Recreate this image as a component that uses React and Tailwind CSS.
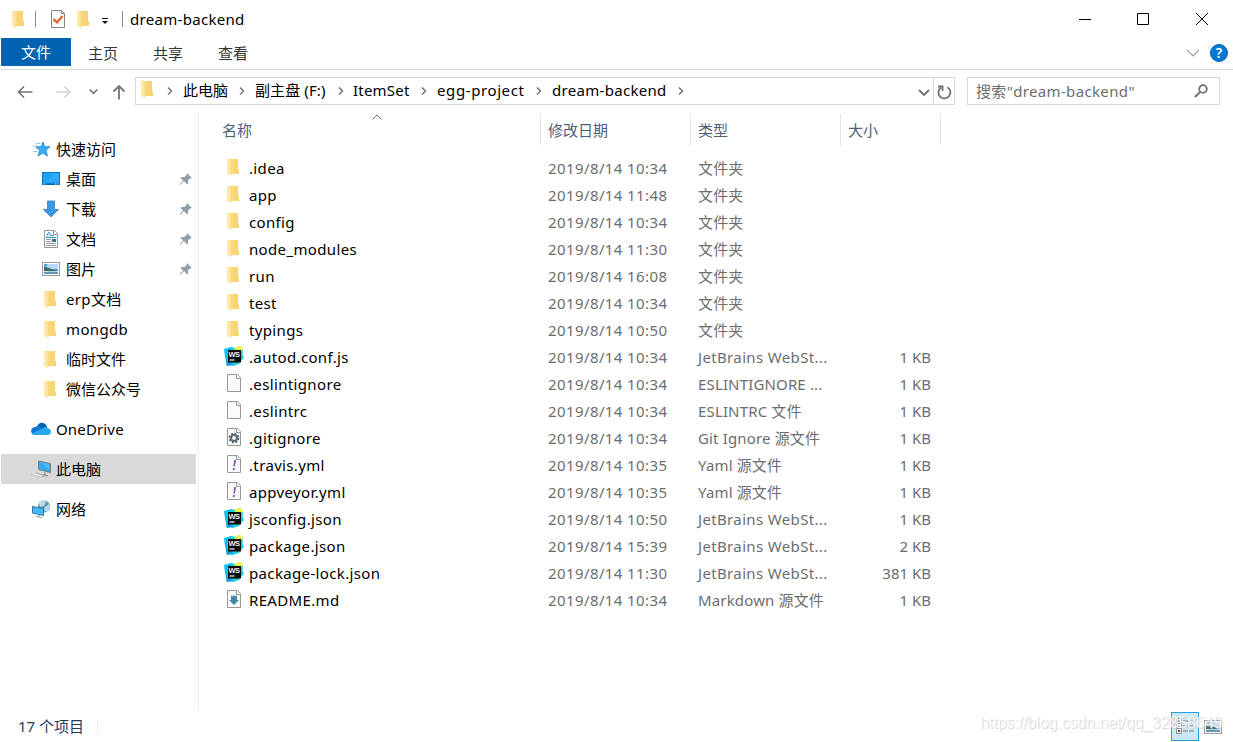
import React from "react";
import clsx from "clsx";

const quickAccess = [
  { name: "桌面", icon: "desktop", pinned: true },
  { name: "下载", icon: "download", pinned: true },
  { name: "文档", icon: "document", pinned: true },
  { name: "图片", icon: "picture", pinned: true },
  { name: "erp文档", icon: "folder" },
  { name: "mongdb", icon: "folder" },
  { name: "临时文件", icon: "folder" },
  { name: "微信公众号", icon: "folder" },
];

const files = [
  { name: ".idea", icon: "folder", date: "2019/8/14 10:34", type: "文件夹" },
  { name: "app", icon: "folder", date: "2019/8/14 11:48", type: "文件夹" },
  { name: "config", icon: "folder", date: "2019/8/14 10:34", type: "文件夹" },
  { name: "node_modules", icon: "folder", date: "2019/8/14 11:30", type: "文件夹" },
  { name: "run", icon: "folder", date: "2019/8/14 16:08", type: "文件夹" },
  { name: "test", icon: "folder", date: "2019/8/14 10:34", type: "文件夹" },
  { name: "typings", icon: "folder", date: "2019/8/14 10:50", type: "文件夹" },
  { name: ".autod.conf.js", icon: "webstorm", date: "2019/8/14 10:34", type: "JetBrains WebSt...", size: "1 KB" },
  { name: ".eslintignore", icon: "file", date: "2019/8/14 10:34", type: "ESLINTIGNORE ...", size: "1 KB" },
  { name: ".eslintrc", icon: "file", date: "2019/8/14 10:34", type: "ESLINTRC 文件", size: "1 KB" },
  { name: ".gitignore", icon: "gear", date: "2019/8/14 10:34", type: "Git Ignore 源文件", size: "1 KB" },
  { name: ".travis.yml", icon: "yaml", date: "2019/8/14 10:35", type: "Yaml 源文件", size: "1 KB" },
  { name: "appveyor.yml", icon: "yaml", date: "2019/8/14 10:35", type: "Yaml 源文件", size: "1 KB" },
  { name: "jsconfig.json", icon: "webstorm", date: "2019/8/14 10:50", type: "JetBrains WebSt...", size: "1 KB" },
  { name: "package.json", icon: "webstorm", date: "2019/8/14 15:39", type: "JetBrains WebSt...", size: "2 KB" },
  { name: "package-lock.json", icon: "webstorm", date: "2019/8/14 11:30", type: "JetBrains WebSt...", size: "381 KB" },
  { name: "README.md", icon: "markdown", date: "2019/8/14 10:34", type: "Markdown 源文件", size: "1 KB" },
];

const Folder = () => (
  <svg width="20" height="20" viewBox="0 0 20 20" className="shrink-0">
    <path d="M4 2h10v10h1v5H4z" fill="#fadb80" />
    <path d="M9 2h5v10h1v5H9z" fill="#f5d06d" opacity=".6" />
    <path d="M3 2l4 2v15l-4-2z" fill="#ffe9a6" />
    <path d="M7 4v14.500" stroke="#f2d27a" strokeWidth=".6" />
  </svg>
);

// blank sheet with a folded corner, other file icons draw on top of it
const Sheet = ({ children }) => (
  <svg width="20" height="20" viewBox="0 0 20 20" className="shrink-0">
    <path d="M3.500 1.500h10l3 3v14h-13z" fill="#fafafa" stroke="#979797" />
    <path d="M12.500 1.500v4h4" fill="#fff" stroke="#979797" />
    {children}
  </svg>
);

const WebStorm = () => (
  <svg width="20" height="20" viewBox="0 0 20 20" className="shrink-0">
    <path d="M0 3l7-2 6 2-1 14-9 3-2-9z" fill="#07c3f2" />
    <path d="M7 1l10 2 2 1-.5 4L20 12l-3 3-2 3-6 2-6-1z" fill="#1fd3dc" />
    <path d="M10 3l4-3h3l2 4-4 2z" fill="#e9f24c" />
    <path d="M2 14l1 6 7-2z" fill="#1596e8" />
    <rect x="4" y="4" width="13" height="12.500" fill="#080808" />
    <text x="4.500" y="10.500" fontSize="7.500" fontWeight="700" textLength="11.500" className="font-['Liberation_Sans']" fill="#eee">
      WS
    </text>
    <path d="M5.500 14h5" stroke="#fff" strokeWidth="1.200" />
  </svg>
);

const Picture = () => (
  <svg width="20" height="20" viewBox="0 0 20 20" className="shrink-0">
    <rect x="1.500" y="3.500" width="17" height="13" fill="#fff" stroke="#9a9a9a" />
    <rect x="3" y="5" width="14" height="10" fill="#5aa0e6" />
    <path d="M7 5h10v5H5c0-2 1-4 2-5z" fill="#b8d9f7" />
    <path d="M3 8c4 0 6 2 14 4v1H3z" fill="#3d6b66" />
    <path d="M3 12h14v3H3z" fill="#6496b8" />
    <path d="M3 12c5 .5 8 .5 14 0v1H3z" fill="#dce9ef" />
  </svg>
);

const FileIcon = ({ type }) => {
  switch (type) {
    case "folder":
      return <Folder />;
    case "webstorm":
      return <WebStorm />;
    case "picture":
      return <Picture />;
    case "file":
      return <Sheet />;
    case "gear":
      return (
        <Sheet>
          <circle cx="10" cy="11" r="4.400" fill="none" stroke="#566b78" strokeWidth="2" strokeDasharray="1.900 1.560" />
          <circle cx="10" cy="11" r="3" fill="none" stroke="#566b78" strokeWidth="2.200" />
        </Sheet>
      );
    case "yaml":
      return (
        <Sheet>
          <path d="M10.200 6h2l-1.300 6.500H9.400z" fill="#8d55b5" />
          <path d="M9 14h1.900l-.4 2H8.600z" fill="#8d55b5" />
        </Sheet>
      );
    case "markdown":
      return (
        <Sheet>
          <path d="M7 6l1.500 1.500L10 6l1.500 1.500L13 6v5h2l-5 5-5-5h2z" fill="#4388a8" />
        </Sheet>
      );
    case "document":
      return (
        <Sheet>
          <path d="M5.500 7.500l2-4h1l1 4M10 6.500h3M5 8.500h10" stroke="#2b9bd6" fill="none" />
          <path d="M5 10.500h5M5 12.500h5M5 14.500h10M5 16.500h10" stroke="#9a9a9a" />
          <rect x="11" y="10" width="4" height="3" fill="#36708f" />
        </Sheet>
      );
    case "desktop":
      return (
        <svg width="20" height="20" viewBox="0 0 20 20" className="shrink-0">
          <rect x="1.500" y="3.500" width="17" height="12" fill="#18a0fb" stroke="#0876c0" />
          <path d="M12 4h6v8L4 15z" fill="#3eb1ff" opacity=".5" />
          <path d="M2 15h16" stroke="#075b9c" />
          <path d="M3 15h1M14 15h1M16 15h1" stroke="#fff" />
        </svg>
      );
    case "download":
      return (
        <svg width="20" height="20" viewBox="0 0 20 20" className="shrink-0">
          <path d="M6.500 2h7v8.500h4L10 18l-7.500-7.500h4z" fill="#3c97e8" stroke="#2b7ccb" strokeWidth=".8" />
        </svg>
      );
    default:
      return null;
  }
};

const Star = () => (
  <svg width="20" height="20" viewBox="0 0 20 20" className="shrink-0">
    <path d="M12 3l1.700 4.700h5.300l-4 3.600 1.500 5.700-4.800-3-4.700 3 1.600-5.700L5 7.700h5.300z" fill="#3baef0" stroke="#1c86d0" strokeWidth=".8" />
    <path d="M5 4.500h4.500M2.500 7h5M4.500 9.500h3M2 12.500h4.500" stroke="#6bbdf0" strokeWidth=".8" />
  </svg>
);

const OneDrive = () => (
  <svg width="20" height="20" viewBox="0 0 20 20" className="shrink-0">
    <path d="M6 8c1-5 8-6 10 0l-2 5z" fill="#0364b8" />
    <path d="M4.500 16C-1 16-1.500 8.500 4 8c2-1.500 5-.8 6 1l5 5-2 2z" fill="#0f78d4" />
    <path d="M13 8.500c2-1.200 3.500-.5 4 .8 4 .7 4 6.700-.5 6.700H4c-1.500 0-2.500-.6-3-1.500z" fill="#28a8ea" />
  </svg>
);

const Computer = () => (
  <svg width="20" height="20" viewBox="0 0 20 20" className="shrink-0">
    <path d="M7.500 2l12 2.500v9l-12-3z" fill="#35aaf3" stroke="#71808a" />
    <path d="M9 3l9 7V5z" fill="#70caff" opacity=".55" />
    <path d="M14 13v3M12 15.500l5 1.500" stroke="#7c8790" />
    <path d="M0 15l10 3 5-1-10-3" fill="none" stroke="#aab0b6" />
    <path d="M1 14.800l10 2.700" stroke="#eee" />
  </svg>
);

const Network = () => (
  <svg width="20" height="20" viewBox="0 0 20 20" className="shrink-0">
    <circle cx="13" cy="7.500" r="6" fill="#5b9bb9" />
    <path d="M8 4c3-3 6-2 7-1l-2 4-4 1zM14 8l4-3 1 3-3 5-3-2z" fill="#bddae8" />
    <path d="M1.500 7.500l11 2v7l-11-2.500z" fill="#47b9fa" stroke="#33789f" />
    <path d="M8 16v2M5 17.500l6 1" stroke="#90a0aa" />
  </svg>
);

const Pin = () => (
  <svg width="14" height="14" viewBox="0 0 14 14" className="shrink-0">
    <path d="M8 1l5 5-2 .5-2 2v3l-1 1-3-3.500-4 4L.500 12.500 4 8.500 1.500 6l1-1h3l2-2z" fill="#90a0ab" />
  </svg>
);

const Chevron = ({ className }) => (
  <svg width="6" height="10" viewBox="0 0 6 10" className={clsx("shrink-0", className)}>
    <path d="M1 1.500L4.500 5 1 8.500" fill="none" stroke="#757575" strokeWidth="1.500" />
  </svg>
);

const TitleBar = () => (
  <header className="flex h-[38px] items-center pl-[9px]">
    <Folder />
    <div className="ml-[6px] h-4 w-px bg-[#8f8f8f]" />
    <svg width="14" height="18" viewBox="0 0 14 18" className="ml-[15px]">
      <path d="M.500.500h10l3 3v14H.500z" fill="#fafafa" stroke="#858585" />
      <path d="M10.500.500v3h3" fill="none" stroke="#858585" />
      <path d="M2.500 9l3.500 3.500L11.500 6" fill="none" stroke="#ed5a24" strokeWidth="2" />
    </svg>
    <div className="ml-[9px]">
      <Folder />
    </div>
    <svg width="8" height="7" viewBox="0 0 8 7" className="ml-[7px] mt-1">
      <path d="M1 .500h6" stroke="#111" />
      <path d="M1 3h6L4 6z" fill="#111" />
    </svg>
    <div className="ml-[13px] h-4 w-px bg-[#8f8f8f]" />
    <h1 className="ml-[7px] text-[15px] tracking-[0.3px]">dream-backend</h1>
    <div className="ml-auto mr-[25px] flex items-center">
      <svg width="12" height="13" viewBox="0 0 12 13">
        <path d="M0 6.500h12" stroke="#000" />
      </svg>
      <svg width="12" height="12" viewBox="0 0 12 12" className="ml-[46px]">
        <path d="M.500.500h11v11H.500z" fill="none" stroke="#000" />
      </svg>
      <svg width="12" height="12" viewBox="0 0 12 12" className="ml-[47px]">
        <path d="M0 0l12 12M12 0L0 12" stroke="#000" />
      </svg>
    </div>
  </header>
);

const Ribbon = () => (
  <nav className="ml-px flex h-8 items-start border-b border-[#dadbdc] text-[15px]">
    <button className="h-7 w-[70px] bg-[#0063b1] text-white">文件</button>
    <button className="ml-[17px] h-7 pt-0.5 text-[#333]">主页</button>
    <button className="ml-[35px] h-7 pt-0.5 text-[#333]">共享</button>
    <button className="ml-[35px] h-7 pt-0.5 text-[#333]">查看</button>
    <div className="ml-auto mr-[5px] flex h-[30px] items-center gap-[11px]">
      <svg width="12" height="8" viewBox="0 0 12 8">
        <path d="M0 1l6 6 6-6" fill="none" stroke="#999" strokeWidth="1.200" />
      </svg>
      <div className="flex h-[18px] w-[18px] items-center justify-center rounded-full border border-[#0561ae] bg-[#0078d7] text-[14px] font-semibold leading-none text-white">
        ?
      </div>
    </div>
  </nav>
);

const AddressBar = () => (
  <div className="flex h-[42px] items-start pt-[7px] text-[15px]">
    <div className="flex h-7 w-[135px] items-center pl-[17px] pt-px">
      <svg width="16" height="14" viewBox="0 0 16 14">
        <path d="M15.500 7H1.500M7 1.500L1.500 7 7 12.500" fill="none" stroke="#707070" strokeWidth="1.600" />
      </svg>
      <svg width="16" height="14" viewBox="0 0 16 14" className="ml-[23px]">
        <path d="M0 7h14M8.500 1.500L14 7 8.500 12.500" fill="none" stroke="#d4d4d4" strokeWidth="1.600" />
      </svg>
      <svg width="9" height="7" viewBox="0 0 9 7" className="ml-[17px]">
        <path d="M.700 1.500l3.800 3.800L8.300 1.500" fill="none" stroke="#757575" strokeWidth="1.600" />
      </svg>
      <svg width="14" height="16" viewBox="0 0 14 16" className="ml-[14px]">
        <path d="M7 15.500V2M1.500 7.500L7 2l5.500 5.500" fill="none" stroke="#757575" strokeWidth="1.800" />
      </svg>
    </div>
    <div className="flex h-7 w-[820px] items-center border border-[#d9d9d9] pl-[2px]">
      <div className="-mt-1">
        <Folder />
      </div>
      <Chevron className="ml-[9px]" />
      <span className="mb-0.5 ml-[10px] w-[46px] whitespace-nowrap">此电脑</span>
      <Chevron className="ml-[10px]" />
      <span className="mb-0.5 ml-[10px] w-[73px] whitespace-nowrap tracking-[0.1px]">副主盘 (F:)</span>
      <Chevron className="ml-[10px]" />
      <span className="mb-0.5 ml-[9px] w-[58px] whitespace-nowrap tracking-[0.2px]">ItemSet</span>
      <Chevron className="ml-[10px]" />
      <span className="mb-0.5 ml-[10px] w-[88px] whitespace-nowrap tracking-[0.6px]">egg-project</span>
      <Chevron className="ml-[11px]" />
      <span className="mb-0.5 ml-[10px] w-[115px] whitespace-nowrap tracking-[0.3px]">dream-backend</span>
      <Chevron className="ml-[11px]" />
      <svg width="12" height="8" viewBox="0 0 12 8" className="ml-auto mr-[3px] mt-1">
        <path d="M1 1l5 5 5-5" fill="none" stroke="#707070" strokeWidth="1.800" />
      </svg>
      <div className="flex h-full w-[21px] items-center justify-center border-l border-[#d9d9d9] pt-0.5">
        <svg width="15" height="15" viewBox="0 0 15 15">
          <path d="M10.500 2.300A6 6 0 1 1 4 2.500" fill="none" stroke="#707070" strokeWidth="1.800" />
          <path d="M1 1.500h4.500V6" fill="none" stroke="#707070" strokeWidth="1.800" />
        </svg>
      </div>
    </div>
    <div className="ml-3 flex h-7 w-[253px] items-center border border-[#d9d9d9] pl-2 pr-[11px] text-[#6d6d6d]">
      <span className="whitespace-nowrap tracking-[0.35px]">搜索"dream-backend"</span>
      <svg width="14" height="14" viewBox="0 0 14 14" className="ml-auto">
        <circle cx="9" cy="5" r="3.800" fill="none" stroke="#707070" strokeWidth="1.800" />
        <path d="M6 8L1 13" stroke="#707070" strokeWidth="2" />
      </svg>
    </div>
  </div>
);

const SidebarRow = ({ icon, name, className }) => (
  <div className={clsx("flex h-[30px] items-center gap-[5px] pl-[30px]", className)}>
    {icon}
    <span>{name}</span>
  </div>
);

const Sidebar = () => (
  <aside className="w-[199px] shrink-0 border-r border-[#f0f0f0] pl-px pt-[22px] text-[15px]">
    <SidebarRow icon={<Star />} name="快速访问" />
    {quickAccess.map((item) => (
      <div key={item.name} className="flex h-[30px] items-center pl-[40px] pr-[5px]">
        <FileIcon type={item.icon} />
        <span
          className={clsx("ml-[5px]", {
            "tracking-[0.35px]": item.name === "mongdb" || item.name === "erp文档",
          })}
        >
          {item.name}
        </span>
        {item.pinned && (
          <div className="ml-auto">
            <Pin />
          </div>
        )}
      </div>
    ))}
    <SidebarRow icon={<OneDrive />} name="OneDrive" className="mt-[10px] tracking-[0.15px]" />
    <SidebarRow icon={<Computer />} name="此电脑" className="mr-[2px] mt-[10px] bg-[#d9d9d9]" />
    <SidebarRow icon={<Network />} name="网络" className="mt-[10px]" />
  </aside>
);

const FileList = () => (
  <main className="pl-[15px] pt-[2px] text-[15px]">
    <div className="flex h-8 items-center text-[#4c607a]">
      <div className="relative flex h-full w-[327px] items-center border-r border-[#e5e5e5] pl-2">
        名称
        <svg width="10" height="6" viewBox="0 0 10 6" className="absolute left-[158px] top-0">
          <path d="M.500 5.500L5 1l4.500 4.500" fill="none" stroke="#6d6d6d" />
        </svg>
      </div>
      <div className="flex h-full w-[150px] items-center border-r border-[#e5e5e5] pl-[7px]">修改日期</div>
      <div className="flex h-full w-[150px] items-center border-r border-[#e5e5e5] pl-[7px]">类型</div>
      <div className="flex h-full w-[100px] items-center border-r border-[#e5e5e5] pl-[7px]">大小</div>
    </div>
    <div className="pt-[9px]">
      {files.map((file) => (
        <div key={file.name} className="flex h-[27px] items-center whitespace-nowrap text-[#6d6d6d]">
          <div className="flex w-[334px] items-center pl-[10px]">
            <div className="-mt-1">
              <FileIcon type={file.icon} />
            </div>
            <span className="ml-[5px] tracking-[0.35px] text-black">{file.name}</span>
          </div>
          <span className="w-[150px] tracking-[0.4px]">{file.date}</span>
          <span className={clsx("w-[143px]", file.icon === "webstorm" ? "tracking-[0.35px]" : "tracking-[0.15px]")}>
            {file.type}
          </span>
          <span className="w-[90px] text-right">{file.size}</span>
        </div>
      ))}
    </div>
  </main>
);

const StatusBar = () => (
  <footer className="relative flex h-[31px] items-center text-[15px]">
    <span className="ml-[18px] text-[#1e395b]">17 个项目</span>
    <div className="ml-[13px] h-[14px] w-px bg-[#eee]" />
    <div className="ml-auto mr-[10px] flex items-center gap-1">
      <div className="flex h-[29px] w-7 items-center justify-center border border-[#26a0da] bg-[#cbe8f6]">
        <svg width="18" height="17" viewBox="0 0 18 17">
          <path d="M.500.500h5v5h-5zM.500 5.500h5v5h-5zM.500 10.500h5v5h-5z" fill="#fff" stroke="#888" />
          <path d="M7 3h5M13 3h5M7 8h5M13 8h5M7 13h5M13 13h5" stroke="#777" />
          <path d="M2 3h2" stroke="#5b9bc4" strokeWidth="2" />
          <path d="M2 8h2" stroke="#a5bf62" strokeWidth="2" />
          <path d="M2 13h2" stroke="#8b332b" strokeWidth="2" />
        </svg>
      </div>
      <Picture />
    </div>
    <span className="absolute left-[980px] top-0 whitespace-nowrap font-['Liberation_Sans'] text-[16px] tracking-[-0.1px] text-white/70 [text-shadow:1px_1px_1px_#d4d4d4]">
      https://blog.csdn.net/qq_32858649
    </span>
  </footer>
);

const App = () => {
  return (
    <div className="flex h-[742px] w-[1233px] flex-col overflow-hidden bg-white font-['Noto_Sans','Noto_Sans_CJK_SC',sans-serif] text-black">
      <TitleBar />
      <Ribbon />
      <AddressBar />
      <div className="flex min-h-0 flex-1">
        <Sidebar />
        <FileList />
      </div>
      <StatusBar />
    </div>
  );
};

export default App;
